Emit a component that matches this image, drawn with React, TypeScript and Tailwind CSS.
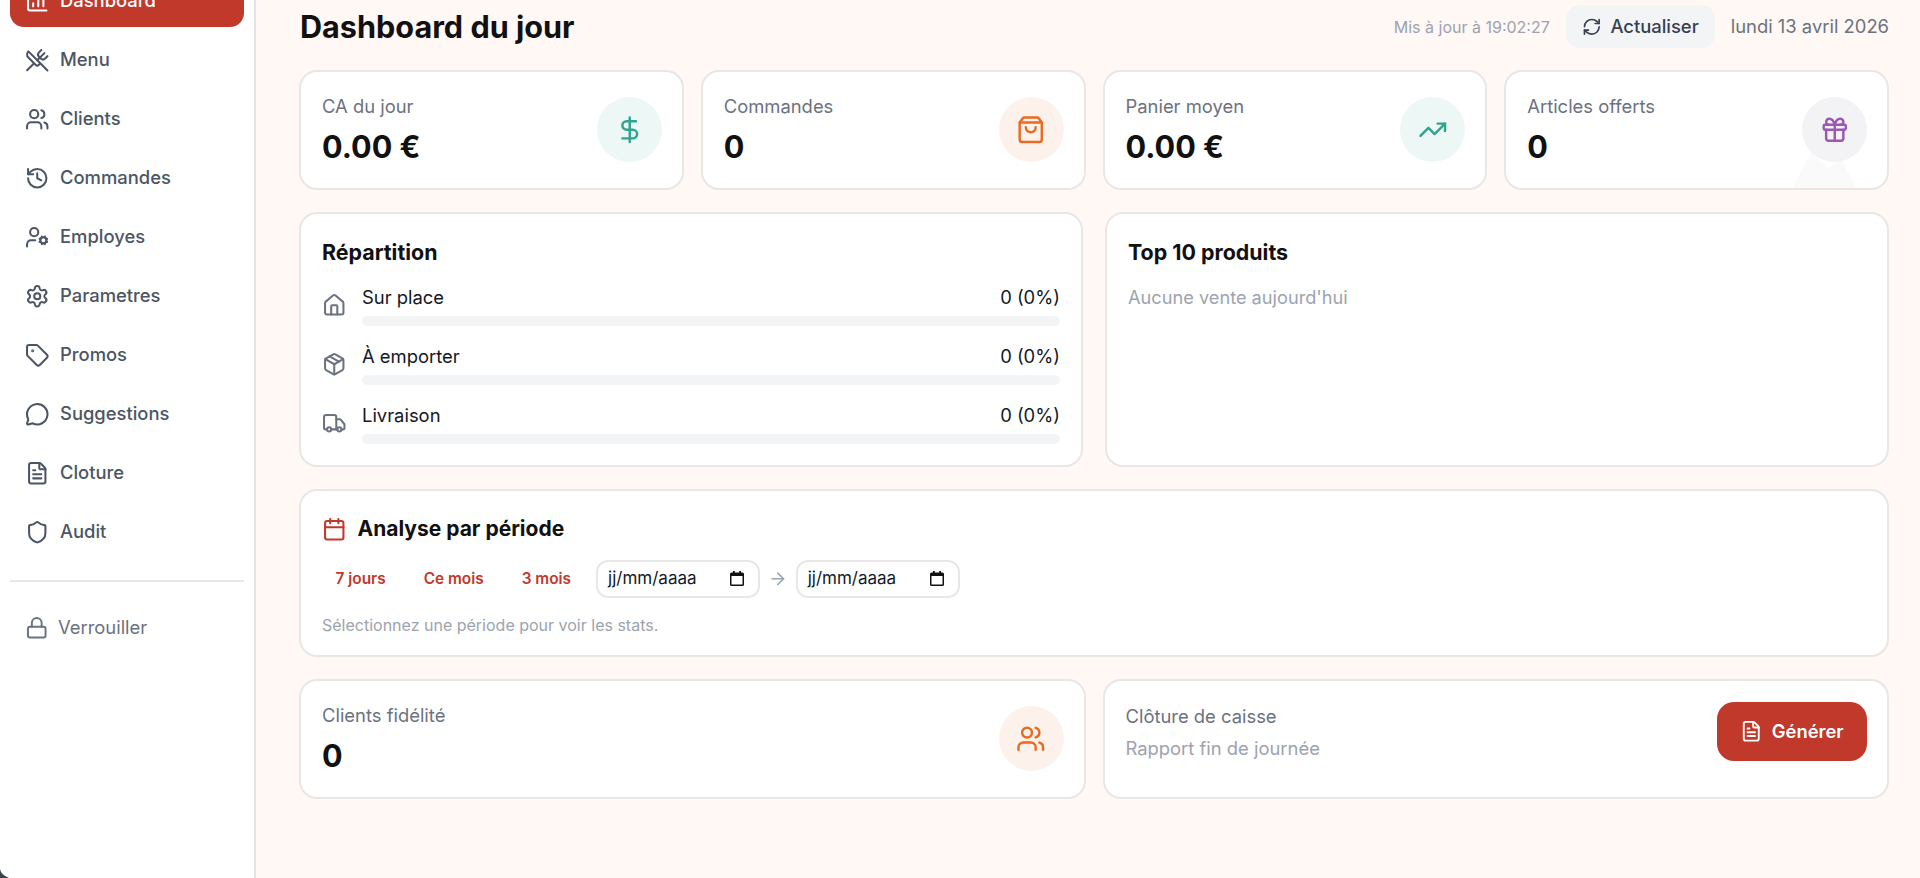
import {
  ChartColumn,
  UtensilsCrossed,
  Users,
  History,
  UserCog,
  Settings,
  Tag,
  MessageCircle,
  FileText,
  Shield,
  Lock,
  RefreshCw,
  DollarSign,
  ShoppingBag,
  TrendingUp,
  Gift,
  House,
  Package,
  Truck,
  Calendar,
  ArrowRight,
} from "lucide-react";

const navItems = [
  { label: "Menu", icon: UtensilsCrossed },
  { label: "Clients", icon: Users },
  { label: "Commandes", icon: History },
  { label: "Employes", icon: UserCog },
  { label: "Parametres", icon: Settings },
  { label: "Promos", icon: Tag },
  { label: "Suggestions", icon: MessageCircle },
  { label: "Cloture", icon: FileText },
  { label: "Audit", icon: Shield },
];

const channels = [
  { label: "Sur place", icon: House },
  { label: "À emporter", icon: Package },
  { label: "Livraison", icon: Truck },
];

function Sidebar() {
  return (
    <aside className="w-[256px] shrink-0 h-[878px] overflow-hidden bg-white border-r-2 border-[#e3e3e3] px-[10px]">
      <nav className="-mt-[27px] flex flex-col gap-[5px]">
        <div className="h-[54px] rounded-[14px] bg-[#c0392b] text-white flex items-center gap-[10.5px] px-[15px] pt-[2px] text-[18.4px] font-medium">
          <ChartColumn size={24.5} strokeWidth={2} />
          Dashboard
        </div>
        {navItems.map((item) => (
          <div key={item.label} className="h-[54px] flex items-center gap-[10.5px] px-[15px] pt-[2px] text-[18.4px] font-medium text-[#4b5563]">
            <item.icon size={24.5} strokeWidth={2} />
            {item.label}
          </div>
        ))}
      </nav>
      <div className="mt-[22px] border-t-2 border-[#e5e7eb] pt-[19px]">
        <div className="h-[54px] flex items-center gap-[10px] px-[14.5px] text-[18.4px] text-[#6b7280]">
          <Lock size={23.5} strokeWidth={2} />
          Verrouiller
        </div>
      </div>
    </aside>
  );
}

function StatCard({ label, value, icon: Icon, circle, color, children }: any) {
  return (
    <div className="relative overflow-hidden h-[120px] bg-white border-2 border-[#e9e7e6] rounded-[18px] pl-[21px] pr-[20px] flex justify-between pt-[24px]">
      {children}
      <div>
        <p className="text-[18.4px] leading-[21px] text-[#6b7280]">{label}</p>
        <p className="mt-[12px] text-[30.6px] leading-[36px] font-bold text-[#111111]">{value}</p>
      </div>
      <div className={`relative w-[65px] h-[65px] mt-[1px] rounded-full flex items-center justify-center ${circle} ${color}`}>
        <Icon size={29.5} strokeWidth={2} />
      </div>
    </div>
  );
}

function DateField() {
  return (
    <div className="w-[164px] h-[38px] flex items-center justify-between bg-white border-2 border-[#e9e7e6] rounded-[12px] pl-[10px] pr-[14px] text-[17px] text-[#111827]">
      jj/mm/aaaa
      <svg width="14" height="15" viewBox="0 0 14 15">
        <path d="M3 0h1.800v1.500h4.400V0H11v1.500h1.500A1.500 1.500 0 0 1 14 3v10.500a1.500 1.500 0 0 1-1.500 1.500h-11A1.500 1.500 0 0 1 0 13.500V3a1.500 1.500 0 0 1 1.500-1.500H3z" fill="#111111" />
        <rect x="1.500" y="5" width="11" height="8.500" fill="#ffffff" />
      </svg>
    </div>
  );
}

export default function App() {
  return (
    <div className="relative h-[878px] overflow-hidden flex bg-[#fff8f4] font-['Inter',sans-serif]">
      <Sidebar />

      <main className="flex-1 min-w-0 pl-[43px] pr-[31px]">
        <header className="h-[70px] flex items-start justify-between pt-[5px]">
          <h1 className="mt-[1px] ml-[1px] text-[30.6px] leading-[42px] font-bold text-[#111111]">Dashboard du jour</h1>
          <div className="flex items-center">
            <span className="text-[16px] text-[#9ca3af] mr-[16px]">Mis à jour à 19:02:27</span>
            <button className="h-[43px] w-[149px] rounded-[14px] bg-[#f3f4f6] flex items-center justify-center gap-[9px] text-[18.4px] font-medium text-[#374151]">
              <RefreshCw size={19.6} strokeWidth={2} />
              Actualiser
            </button>
            <span className="ml-[16px] text-[18.4px] text-[#6b7280]">lundi 13 avril 2026</span>
          </div>
        </header>

        <div className="flex flex-col gap-[22px]">
          <div className="grid grid-cols-4 gap-[17px]">
            <StatCard label="CA du jour" value="0.00 €" icon={DollarSign} circle="bg-[#edf7f6]" color="text-[#2fa58e]" />
            <StatCard label="Commandes" value="0" icon={ShoppingBag} circle="bg-[#fdf2eb]" color="text-[#ea6a1f]" />
            <StatCard label="Panier moyen" value="0.00 €" icon={TrendingUp} circle="bg-[#edf7f6]" color="text-[#2fa58e]" />
            <StatCard label="Articles offerts" value="0" icon={Gift} circle="bg-[#f3f2f5]" color="text-[#9b59b6]">
              <svg width="63" height="36" viewBox="0 0 63 36" className="absolute right-[31px] bottom-0">
                <path d="M0 36 L18 0 L28 10 L35 16 L44 10 L48 6 L63 36 Z" fill="#fafafa" />
              </svg>
            </StatCard>
          </div>

          <div className="grid grid-cols-2 gap-[22px]">
            <section className="h-[255px] bg-white border-2 border-[#e9e7e6] rounded-[18px] px-[21px] pt-[24px]">
              <h2 className="text-[21.4px] leading-[28px] font-bold text-[#111111]">Répartition</h2>
              <div className="mt-[19px] flex flex-col gap-[18px]">
                {channels.map((c) => (
                  <div key={c.label} className="flex items-center gap-[15.5px]">
                    <c.icon size={24.5} strokeWidth={2} className="text-[#6b7280]" />
                    <div className="flex-1">
                      <div className="flex justify-between text-[18.4px] leading-[24px] text-[#111827]">
                        <span>{c.label}</span>
                        <span>0 (0%)</span>
                      </div>
                      <div className="mt-[7px] h-[10px] rounded-full bg-[#f3f4f6]" />
                    </div>
                  </div>
                ))}
              </div>
            </section>
            <section className="h-[255px] bg-white border-2 border-[#e9e7e6] rounded-[18px] px-[21px] pt-[24px]">
              <h2 className="text-[21.4px] leading-[28px] font-bold text-[#111111]">Top 10 produits</h2>
              <p className="mt-[19px] text-[18.2px] leading-[24px] text-[#9ca3af]">Aucune vente aujourd'hui</p>
            </section>
          </div>

          <section className="h-[168px] bg-white border-2 border-[#e9e7e6] rounded-[18px] px-[21px] pt-[23px]">
            <div className="flex items-center gap-[11px]">
              <Calendar size={24.5} strokeWidth={2} className="text-[#c0392b]" />
              <h2 className="text-[21px] leading-[30px] font-bold text-[#111111]">Analyse par période</h2>
            </div>
            <div className="mt-[15.5px] flex items-center">
              <span className="ml-[13.5px] text-[15.4px] font-semibold text-[#c0392b]">7 jours</span>
              <span className="ml-[38px] text-[15.4px] font-semibold text-[#c0392b]">Ce mois</span>
              <span className="ml-[38px] text-[15.4px] font-semibold text-[#c0392b]">3 mois</span>
              <div className="ml-[25px]"><DateField /></div>
              <ArrowRight size={19.6} strokeWidth={2} className="mx-[8px] text-[#9ca3af]" />
              <DateField />
            </div>
            <p className="mt-[17px] text-[16px] leading-[20px] text-[#9ca3af]">Sélectionnez une période pour voir les stats.</p>
          </section>

          <div className="grid grid-cols-4 gap-[17px]">
            <div className="col-span-2">
              <StatCard label="Clients fidélité" value="0" icon={Users} circle="bg-[#fdf2eb]" color="text-[#ea6a1f]" />
            </div>
            <div className="col-span-2 h-[120px] bg-white border-2 border-[#e9e7e6] rounded-[18px] pl-[21px] pr-[20px] flex justify-between pt-[21px]">
              <div className="pt-[4px]">
                <p className="text-[18.4px] leading-[21px] text-[#6b7280]">Clôture de caisse</p>
                <p className="mt-[11px] text-[18.4px] leading-[21px] text-[#9ca3af]">Rapport fin de journée</p>
              </div>
              <button className="w-[150px] h-[59px] rounded-[17px] bg-[#c0392b] text-white flex items-center justify-center gap-[9px] text-[18.4px] font-semibold">
                <FileText size={22.5} strokeWidth={2} />
                Générer
              </button>
            </div>
          </div>
        </div>
      </main>

      {/* window corner showing through at the bottom left */}
      <svg width="9" height="9" viewBox="0 0 9 9" className="absolute left-0 bottom-0">
        <path d="M0 0 Q1 6 9 9 L0 9 Z" fill="#3f444c" />
      </svg>
    </div>
  );
}
